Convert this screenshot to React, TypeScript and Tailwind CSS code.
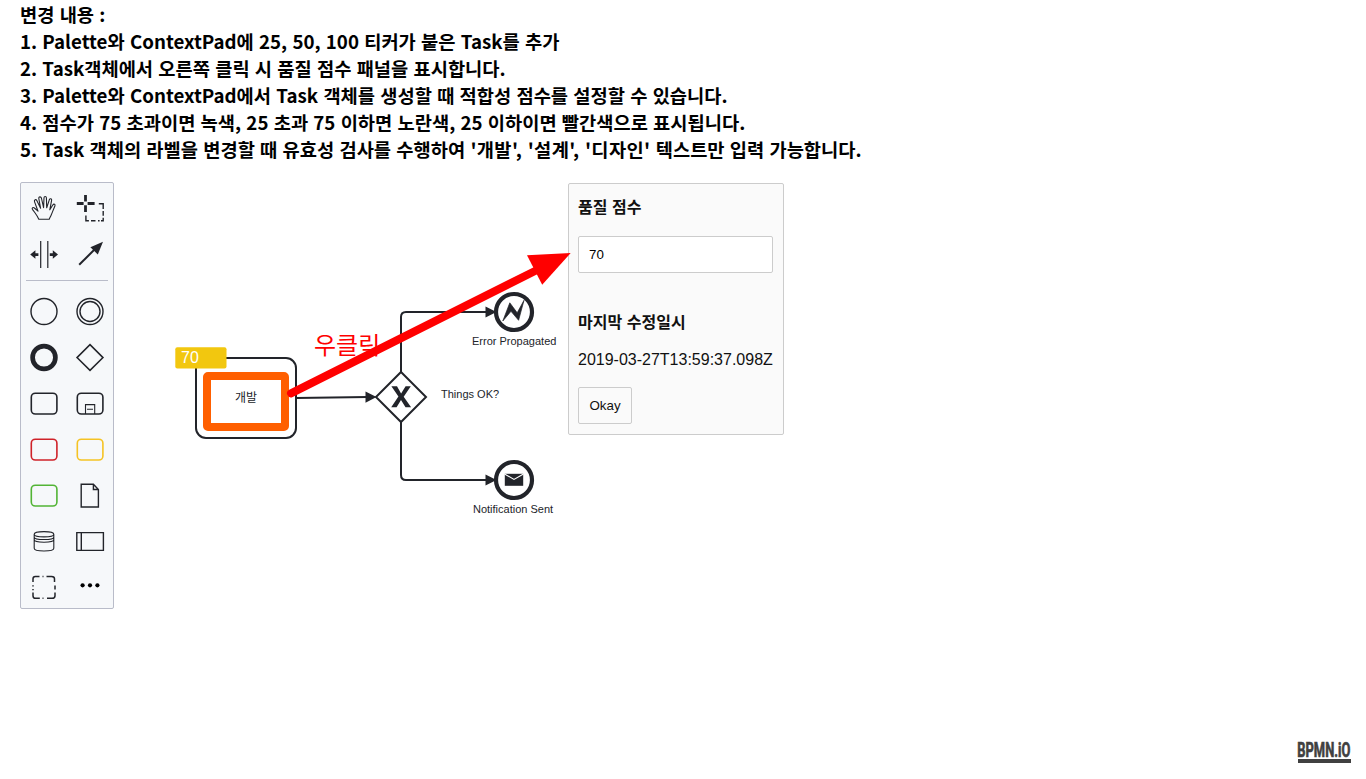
import type { ReactNode } from 'react';

const INK = '#22242a';

const notes: ReactNode[] = [
  '변경 내용 :',
  '1. Palette와 ContextPad에 25, 50, 100 티커가 붙은 Task를 추가',
  '2. Task객체에서 오른쪽 클릭 시 품질 점수 패널을 표시합니다.',
  '3. Palette와 ContextPad에서 Task 객체를 생성할 때 적합성 점수를 설정할 수 있습니다.',
  '4. 점수가 75 초과이면 녹색, 25 초과 75 이하면 노란색, 25 이하이면 빨간색으로 표시됩니다.',
  <>
    5. Task 객체의 라벨을 변경할 때 유효성 검사를 수행하여{' '}
    <span className="tracking-[0.35px]">'개발', '설계', '디자인'</span> 텍스트만 입력 가능합니다.
  </>,
];

function Tool({ label, children }: { label: string; children: ReactNode }) {
  return (
    <button type="button" aria-label={label} className="block h-[46px] w-[46px]">
      <svg width="46" height="46" viewBox="0 0 46 46" fill="none" stroke={INK} strokeWidth="1.4">
        {children}
      </svg>
    </button>
  );
}

function TaskShape({ color = INK }: { color?: string }) {
  return <rect x="10.3" y="15.2" width="25.6" height="20.8" rx="4" stroke={color} strokeWidth="1.6" />;
}

function Palette() {
  return (
    <div className="h-[427px] w-[94px] shrink-0 rounded-[2px] border border-[#b9bcc9] bg-[#f6f8fa]">
      <div className="grid grid-cols-2">
        <Tool label="Hand tool">
          <path
            strokeWidth="1.1"
            strokeLinejoin="round"
            d="M17.8 36.2 C16.6 33.6 15.2 31.5 13.6 29.3 L11.4 26.3 C10.6 24.9 12.2 24 13.4 25 L17 28.2 L13.5 18.6 C12.9 16.7 15 16 15.8 17.6 L19.6 25.3 L17.8 15.5 C17.5 13.6 19.8 13.2 20.4 15 L22.6 24.6 L23 14.8 C23.1 13.1 25.3 13.1 25.4 14.8 L25.7 24.8 L28.3 16.8 C29 15.1 31 15.7 30.6 17.4 L28.8 26.8 L31.8 22 C32.9 20.4 34.6 21.4 33.9 23 C32.4 26.4 31.3 29.6 30.2 32 C29.4 33.8 28.7 34.8 28.2 36.2 Z"
          />
        </Tool>
        <Tool label="Lasso tool">
          <path strokeWidth="2.8" d="M18.5 12v6.6M18.5 22.2v6.8M9.8 20.5h6.8M20.6 20.5h7" />
          <path strokeWidth="1.4" d="M18.9 32.5v5.3h3M24 37.8h4.5M31 37.8h1.6M34 37.8h2.2v-3M36.2 32.7v-4.6M36.2 26v-5.3h-4.4" />
        </Tool>
        <Tool label="Space tool">
          <path strokeWidth="1.2" d="M19.7 12v27M26.8 12v27" />
          <path fill={INK} stroke="none" d="M9.2 25.5l5.2-4.2v3h3v2.6h-3v2.9zM37 25.5l-5.2-4.2v3h-3v2.6h3v2.9z" />
        </Tool>
        <Tool label="Connect tool">
          <path strokeWidth="2" d="M12.2 35.8L29 19" />
          <path fill={INK} stroke="none" d="M36 12.8L23.4 18.2l7.4 7.4z" />
        </Tool>
      </div>
      <div className="mx-[5px] my-[5px] h-px bg-[#b9bcc9]" />
      <div className="grid grid-cols-2">
        <Tool label="Start event">
          <circle cx="23" cy="25.5" r="13" />
        </Tool>
        <Tool label="Intermediate event">
          <circle cx="23" cy="25.5" r="13" />
          <circle cx="23" cy="25.5" r="10" />
        </Tool>
        <Tool label="End event">
          <circle cx="23" cy="25.5" r="11.4" strokeWidth="4.7" />
        </Tool>
        <Tool label="Gateway">
          <path strokeWidth="1.5" d="M23 12.6L36 25.6L23 38.4L10 25.6z" />
        </Tool>
        <Tool label="Task">
          <TaskShape />
        </Tool>
        <Tool label="Sub process">
          <TaskShape />
          <path strokeWidth="1.1" d="M18.5 36v-9.4h9.2V36M20 31.3h6" />
        </Tool>
        <Tool label="Task 25">
          <TaskShape color="#cf2229" />
        </Tool>
        <Tool label="Task 50">
          <TaskShape color="#f5c324" />
        </Tool>
        <Tool label="Task 100">
          <TaskShape color="#52b435" />
        </Tool>
        <Tool label="Data object">
          <path d="M14.2 14.3h12.2l5 5.2v17.5H14.2zM26.4 14.3v5.2h5" />
        </Tool>
        <Tool label="Data store">
          <path
            strokeWidth="1.1"
            d="M13.2 18.2v14c0 3.7 19.6 3.7 19.6 0v-14M13.2 18.2c0-3.5 19.6-3.5 19.6 0s-19.6 3.5-19.6 0M13.2 20.9c0 3.5 19.6 3.5 19.6 0M13.2 23.6c0 3.5 19.6 3.5 19.6 0"
          />
        </Tool>
        <Tool label="Participant">
          <path strokeWidth="1.4" d="M9.8 16.6h26.6v17.8H9.8zM14.3 16.6v17.8" />
        </Tool>
        <Tool label="Group">
          <path
            strokeWidth="1.5"
            d="M12 20v-3.2q0-2.3 2.3-2.3h4.2M21.5 14.5h1M25.5 14.5h5q3 0 3 2.3V20M34 23.5v4M34 30.5v3.2q0 2.6-3 2.6h-5M22.5 36.3h-1M18.8 36.3h-4.3q-2.5 0-2.5-2.6v-3.3M12 28.2v-1.3M12 24.5v-1.3"
          />
        </Tool>
        <Tool label="More">
          <g fill="#000" stroke="none">
            <circle cx="15.6" cy="23.3" r="2.1" />
            <circle cx="23" cy="23.3" r="2.1" />
            <circle cx="30.4" cy="23.3" r="2.1" />
          </g>
        </Tool>
      </div>
    </div>
  );
}

function Diagram() {
  return (
    <svg
      width="454"
      height="427"
      viewBox="114 182 454 427"
      className="relative z-10 shrink-0 overflow-visible font-['Liberation_Sans','Noto_Sans_CJK_KR',sans-serif]"
    >
      <g fill="none" stroke={INK} strokeWidth="2">
        <path d="M296 398L368 397" />
        <path d="M401 372V317Q401 312 406 312H488" />
        <path d="M401 422V475Q401 480 406 480H488" />
        <rect x="196" y="358" width="100" height="80" rx="10" fill="#fff" />
        <path d="M401 372L426 397L401 422L376 397z" fill="#fff" />
      </g>
      <g fill={INK}>
        <path d="M365.5 391.5L376.5 397L365.5 402.8z" />
        <path d="M485.5 306.5L496.5 312L485.5 317.5z" />
        <path d="M485.5 474.5L496.5 480L485.5 485.5z" />
        <path d="M391.4 386.2h5.6l4.1 7.2l4.5-7.2h5.2l-7.1 10.6l7.4 10.5h-5.6l-4.5-7.3l-4.4 7.3h-5.4l7.2-10.7z" />
      </g>
      <g fill="#fff" stroke={INK} strokeWidth="4.2">
        <circle cx="514" cy="312" r="18" />
        <circle cx="514" cy="480" r="18" />
      </g>
      <path
        fill={INK}
        stroke={INK}
        strokeWidth="0.7"
        d="M502.8 321L509.8 302.8L517.2 312.8L524 300.3L518.6 320.3L511 311.3z"
      />
      <rect x="504.8" y="473.8" width="18.4" height="12" fill={INK} />
      <path fill="none" stroke="#fff" strokeWidth="1.1" d="M504.5 474L514 479.4L523.5 474" />
      <g fill={INK} fontSize="11">
        <text x="472" y="345">Error Propagated</text>
        <text x="441" y="398">Things OK?</text>
        <text x="473" y="513">Notification Sent</text>
        <text x="235" y="401.5" fontSize="12">개발</text>
      </g>
      <rect x="175.3" y="347.3" width="51.2" height="21.2" rx="2" fill="#f2c70f" />
      <text x="181" y="363" fontSize="16" fill="#fff">70</text>
      <rect x="207" y="376" width="78" height="51" rx="1" fill="none" stroke="#ff5f00" strokeWidth="8" strokeLinejoin="round" />
      <text x="314" y="353.5" fontSize="24" fill="#f00">우클릭</text>
      <path d="M291 393.3L538 269.5" stroke="#f00" strokeWidth="8" strokeLinecap="round" />
      <path d="M570.7 253L527 255.2L542.2 284.7z" fill="#f00" />
    </svg>
  );
}

function QualityPanel() {
  return (
    <section className="mt-px flex h-[252px] w-[216px] shrink-0 flex-col items-start rounded-[2px] border border-[#ccc] bg-[#fafafa] px-[9px] font-['Liberation_Sans','Noto_Sans_CJK_KR',sans-serif] text-base text-[#111]">
      <h4 className="mt-[10px] h-6 font-['Noto_Sans_CJK_KR',sans-serif] leading-6 font-bold [word-spacing:1px]">
        품질 점수
      </h4>
      <input
        defaultValue="70"
        className="mt-[18px] h-[37px] w-[195px] rounded-[2px] border border-[#ccc] bg-white px-[10px] text-[13.33px] text-black outline-none"
      />
      <h4 className="mt-[36px] h-6 font-['Noto_Sans_CJK_KR',sans-serif] leading-6 font-bold [word-spacing:1px]">
        마지막 수정일시
      </h4>
      <p className="mt-[16px] h-[22px] leading-[22px] whitespace-nowrap">2019-03-27T13:59:37.098Z</p>
      <button
        type="button"
        className="mt-[16px] h-[37px] w-[54px] rounded-[2px] border border-[#ccc] text-[13.33px]"
      >
        Okay
      </button>
    </section>
  );
}

export default function App() {
  return (
    <div className="flex h-[779px] w-[1366px] flex-col overflow-hidden bg-white pl-5">
      <header className="h-[182px] font-['Noto_Sans_CJK_KR',sans-serif] text-[18.72px] leading-[27px] font-bold text-black [word-spacing:1px]">
        {notes.map((note, i) => (
          <p key={i} className="whitespace-nowrap">
            {note}
          </p>
        ))}
      </header>
      <main className="flex items-start">
        <Palette />
        <Diagram />
        <QualityPanel />
      </main>
      <footer className="mt-auto flex justify-end pr-[14px] pb-[15px]">
        <svg width="56" height="24" viewBox="-1 -1 56 24" fill="#404040" className="overflow-visible">
          <text
            x="0.3"
            y="15.8"
            textLength="53"
            lengthAdjust="spacingAndGlyphs"
            stroke="#404040"
            strokeWidth="0.7"
            className="font-['Roboto',sans-serif] text-[20.5px] font-bold"
          >
            BPMN.iO
          </text>
          <rect x="1" y="18" width="53" height="4" />
        </svg>
      </footer>
    </div>
  );
}
